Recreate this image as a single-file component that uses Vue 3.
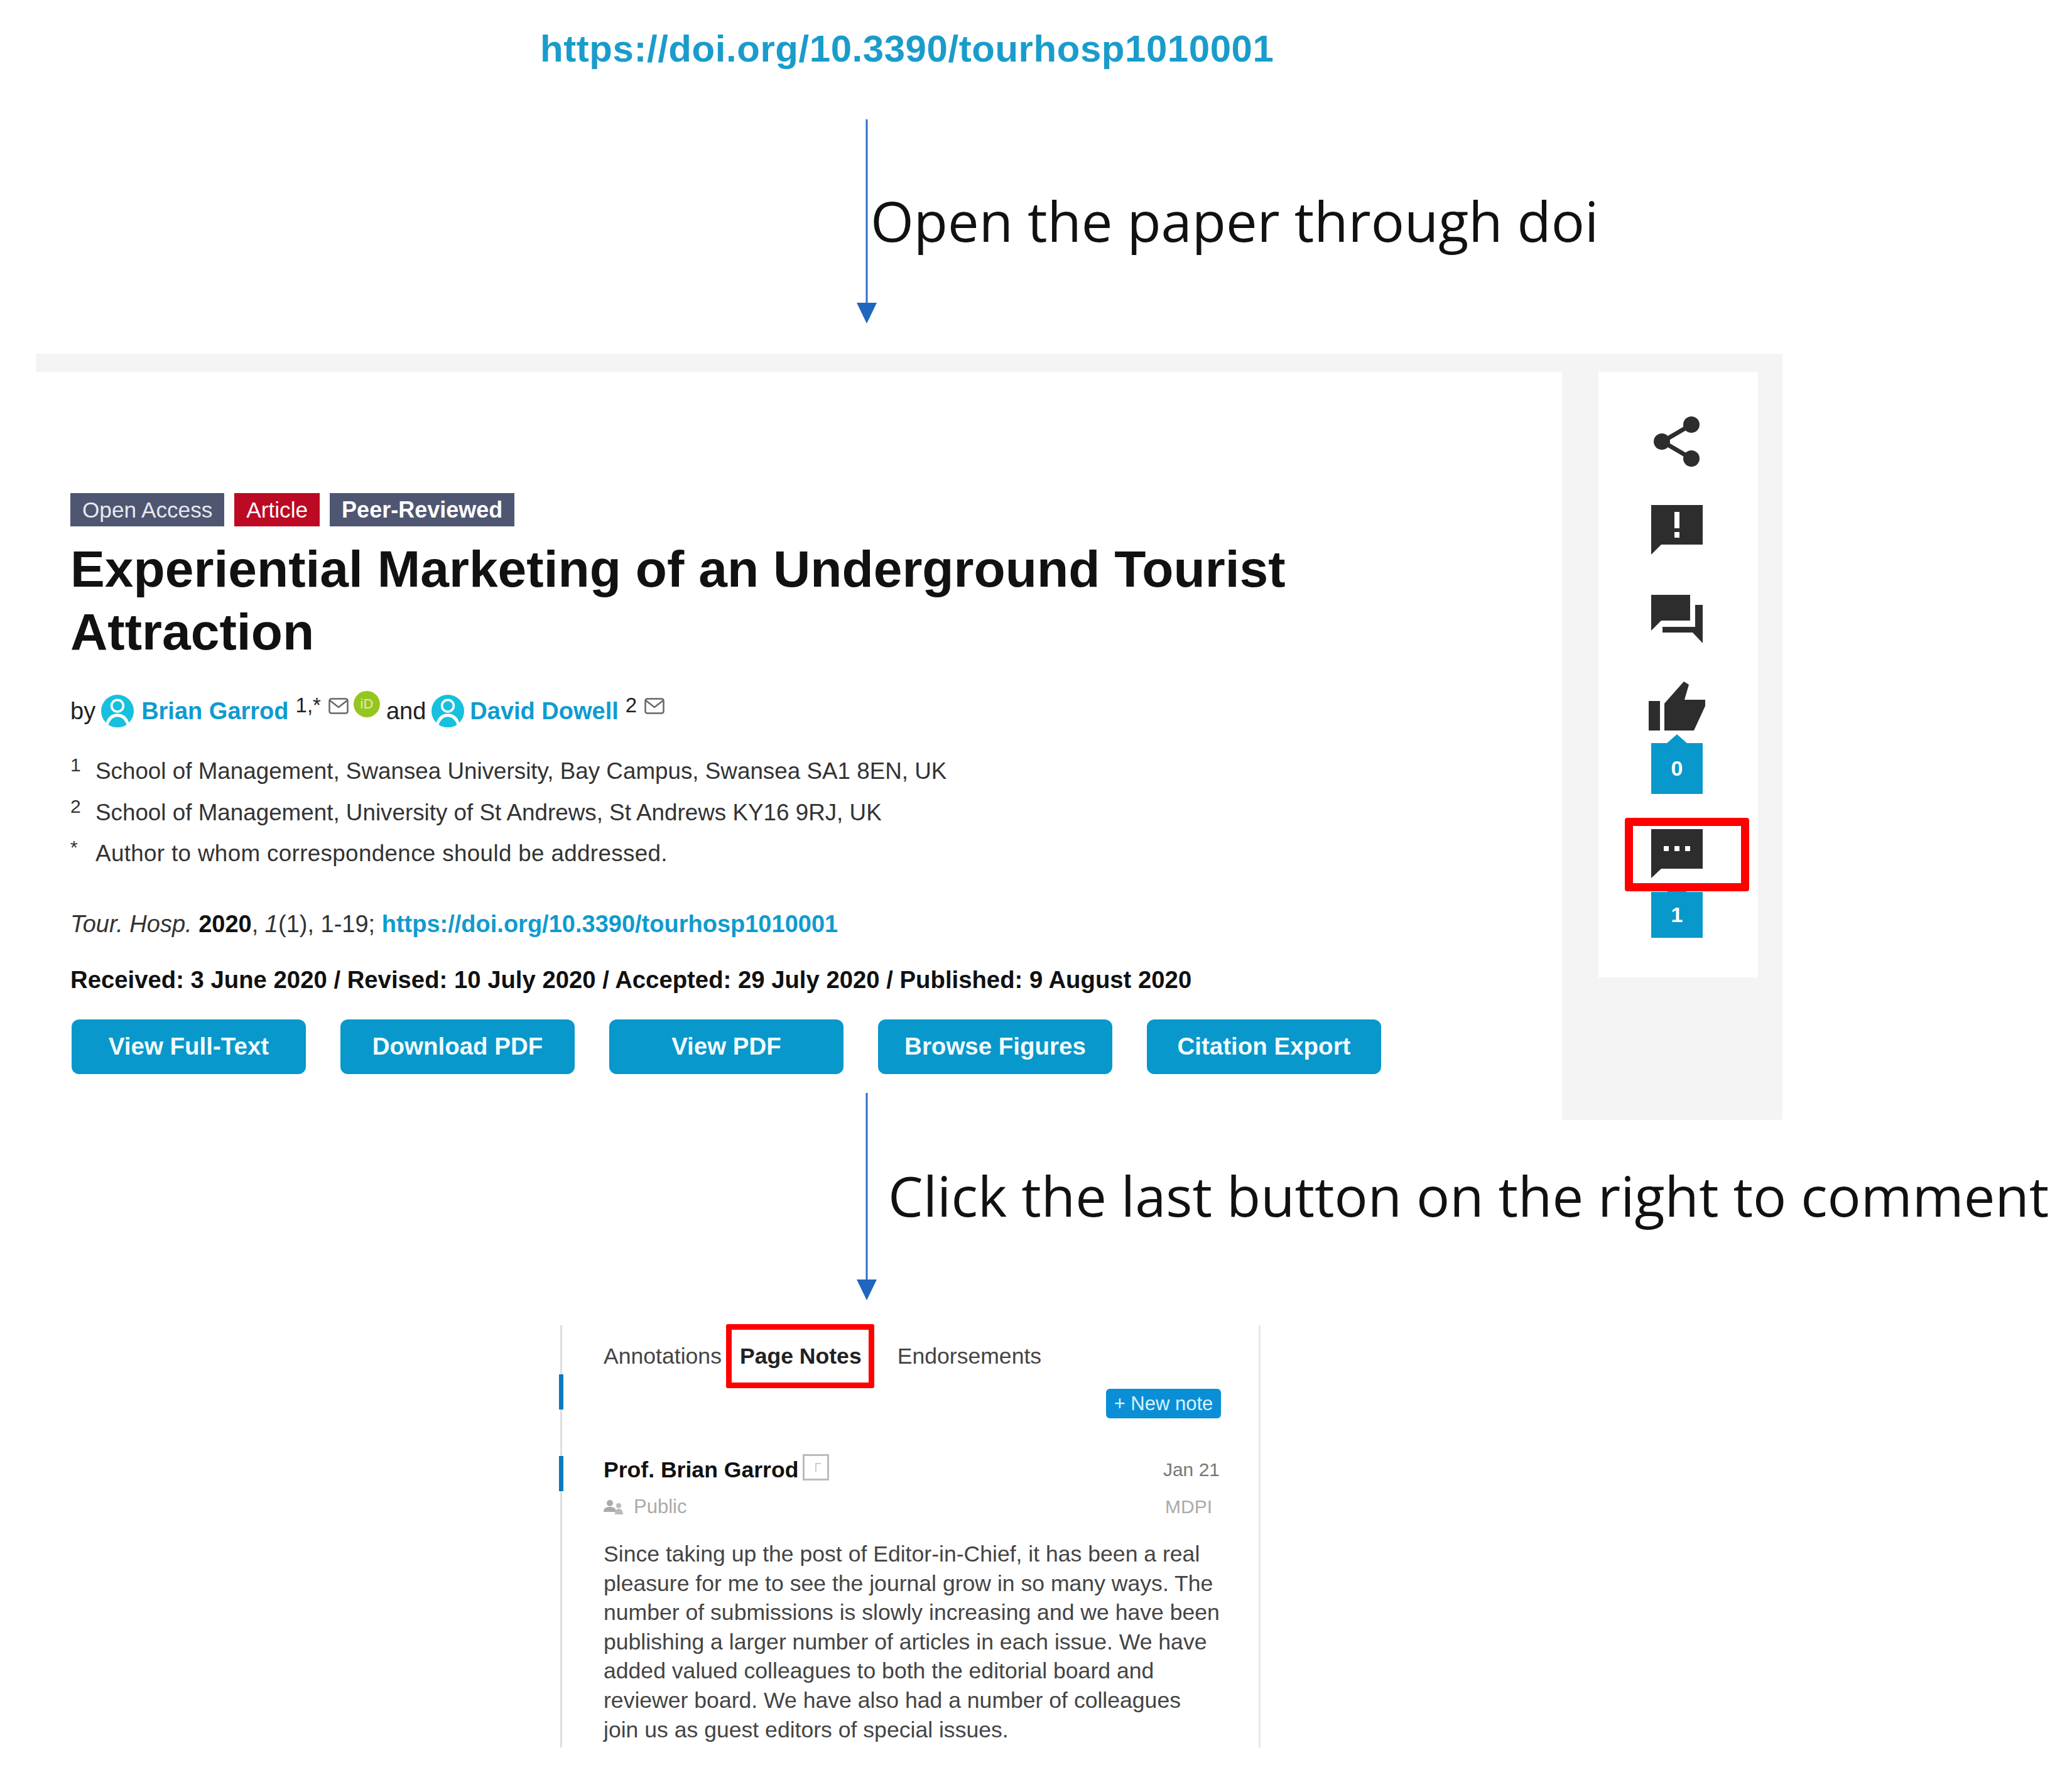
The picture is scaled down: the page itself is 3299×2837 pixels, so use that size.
<template>
  <div class="page">
    <div class="doi-row">
      <a class="doi-big">https://doi.org/10.3390/tourhosp1010001</a>
    </div>

    <div class="step step-one">
      <svg class="arrow" width="36" height="325" viewBox="0 0 36 325">
        <line x1="18" y1="0" x2="18" y2="296" />
        <polygon points="2,292 34,292 18,325" />
      </svg>
      <div class="step-label label-one">Open the paper through doi</div>
    </div>

    <section class="article">
      <div class="article-main">
        <div class="badges">
          <span class="badge slate">Open Access</span>
          <span class="badge red">Article</span>
          <span class="badge slate strong">Peer-Reviewed</span>
        </div>

        <h1 class="title">Experiential Marketing of an Underground Tourist Attraction</h1>

        <div class="authors">
          <span>by</span>
          <svg class="avatar" viewBox="0 0 50 50">
            <circle cx="25" cy="25" r="25" fill="#16c0de" />
            <circle cx="25" cy="17" r="9" fill="none" stroke="#fff" stroke-width="3.5" />
            <path d="M7 44c3-11 10-15 18-15s15 4 18 15c-5 4-11 6-18 6s-13-2-18-6z" fill="#fff" />
            <path d="M11 46c3-8 8-12 14-12s11 4 14 12c-4 3-9 4-14 4s-10-1-14-4z" fill="#16c0de" />
          </svg>
          <a class="author-name">Brian Garrod</a>
          <sup class="author-sup">1,*</sup>
          <svg class="mail" viewBox="0 0 32 26">
            <rect x="1.5" y="1.5" width="29" height="23" rx="3" fill="none" stroke="#666" stroke-width="2.5" />
            <path d="M2 4l14 11L30 4" fill="none" stroke="#666" stroke-width="2.5" />
          </svg>
          <span class="orcid">iD</span>
          <span class="and">and</span>
          <svg class="avatar avatar-tight" viewBox="0 0 50 50">
            <circle cx="25" cy="25" r="25" fill="#16c0de" />
            <circle cx="25" cy="17" r="9" fill="none" stroke="#fff" stroke-width="3.5" />
            <path d="M7 44c3-11 10-15 18-15s15 4 18 15c-5 4-11 6-18 6s-13-2-18-6z" fill="#fff" />
            <path d="M11 46c3-8 8-12 14-12s11 4 14 12c-4 3-9 4-14 4s-10-1-14-4z" fill="#16c0de" />
          </svg>
          <a class="author-name">David Dowell</a>
          <sup class="author-sup">2</sup>
          <svg class="mail" viewBox="0 0 32 26">
            <rect x="1.5" y="1.5" width="29" height="23" rx="3" fill="none" stroke="#666" stroke-width="2.5" />
            <path d="M2 4l14 11L30 4" fill="none" stroke="#666" stroke-width="2.5" />
          </svg>
        </div>

        <div class="affiliations">
          <div v-for="aff in affiliations" :key="aff.mark" class="affiliation">
            <sup class="aff-mark">{{ aff.mark }}</sup>
            <span>{{ aff.text }}</span>
          </div>
        </div>

        <div class="citation">
          <em>Tour. Hosp.</em> <b class="year">2020</b>, <em>1</em>(1), 1-19;
          <a class="doi-small">https://doi.org/10.3390/tourhosp1010001</a>
        </div>

        <div class="dates">Received: 3 June 2020 / Revised: 10 July 2020 / Accepted: 29 July 2020 / Published: 9 August 2020</div>

        <div class="buttons">
          <button v-for="b in buttons" :key="b" class="btn">{{ b }}</button>
        </div>
      </div>

      <aside class="article-side">
        <div class="tools">
          <svg class="tool share" width="74" height="80" viewBox="0 0 74 80">
            <path d="M60 13L14 40l46 27" fill="none" stroke="#2d2d2d" stroke-width="7" />
            <circle cx="60" cy="13" r="13" fill="#2d2d2d" />
            <circle cx="13" cy="40" r="13" fill="#2d2d2d" />
            <circle cx="60" cy="67" r="13" fill="#2d2d2d" />
          </svg>
          <svg class="tool alert" width="82" height="79" viewBox="0 0 82 79">
            <path d="M0 0h82v63H16L0 79z" fill="#2d2d2d" />
            <rect x="37" y="11" width="8" height="26" fill="#fff" />
            <rect x="37" y="43" width="8" height="9" fill="#fff" />
          </svg>
          <svg class="tool chat" width="82" height="77" viewBox="0 0 82 77">
            <path d="M0 0h62v41H16L0 57z" fill="#2d2d2d" />
            <path d="M70 16h12v61L66 60H18v-9h52z" fill="#2d2d2d" />
          </svg>
          <svg class="tool thumb" width="90" height="79" viewBox="0 0 90 79">
            <rect x="0" y="32" width="18" height="47" fill="#2d2d2d" />
            <path d="M25 79V36L56 1l8 5-7 24h33v10L72 79z" fill="#2d2d2d" />
          </svg>
          <div class="count count-like">0</div>
          <svg class="tool comment" width="82" height="78" viewBox="0 0 82 78">
            <path d="M0 0h82v63H16L0 78z" fill="#2d2d2d" />
            <rect x="20" y="27" width="8" height="8" fill="#fff" />
            <rect x="37" y="27" width="8" height="8" fill="#fff" />
            <rect x="54" y="27" width="8" height="8" fill="#fff" />
          </svg>
          <div class="count count-note">1</div>
          <div class="tool-highlight"></div>
        </div>
      </aside>
    </section>

    <div class="step step-two">
      <svg class="arrow" width="36" height="330" viewBox="0 0 36 330">
        <line x1="18" y1="0" x2="18" y2="301" />
        <polygon points="2,297 34,297 18,330" />
      </svg>
      <div class="step-label label-two">Click the last button on the right to comment</div>
    </div>

    <section class="notes">
      <i class="edge-mark mark-a"></i>
      <i class="edge-mark mark-b"></i>

      <nav class="tabs">
        <span class="tab">Annotations</span>
        <span class="tab tab-active">Page Notes</span>
        <span class="tab">Endorsements</span>
        <div class="tab-highlight"></div>
      </nav>

      <div class="new-note-row">
        <button class="new-note">+ New note</button>
      </div>

      <div class="note-head">
        <span class="note-author">Prof. Brian Garrod</span>
        <span class="note-flag"><i></i></span>
        <span class="note-date">Jan 21</span>
      </div>

      <div class="note-meta">
        <svg class="public-icon" width="32" height="24" viewBox="0 0 32 24">
          <circle cx="10" cy="6" r="5" fill="#aaa" />
          <path d="M0 20c0-6 4-8 10-8s10 2 10 8z" fill="#aaa" />
          <circle cx="24" cy="10" r="4" fill="#bbb" />
          <path d="M18 24c0-6 2-9 6-9s7 3 7 9z" fill="#bbb" />
        </svg>
        <span>Public</span>
        <span class="note-group">MDPI</span>
      </div>

      <div class="note-body">
        <div v-for="line in noteLines" :key="line">{{ line }}</div>
      </div>
    </section>
  </div>
</template>

<script setup>
const affiliations = [
  { mark: '1', text: 'School of Management, Swansea University, Bay Campus, Swansea SA1 8EN, UK' },
  { mark: '2', text: 'School of Management, University of St Andrews, St Andrews KY16 9RJ, UK' },
  { mark: '*', text: 'Author to whom correspondence should be addressed.' },
];

const buttons = ['View Full-Text', 'Download PDF', 'View PDF', 'Browse Figures', 'Citation Export'];

const noteLines = [
  'Since taking up the post of Editor-in-Chief, it has been a real',
  'pleasure for me to see the journal grow in so many ways. The',
  'number of submissions is slowly increasing and we have been',
  'publishing a larger number of articles in each issue. We have',
  'added valued colleagues to both the editorial board and',
  'reviewer board. We have also had a number of colleagues',
  'join us as guest editors of special issues.',
];
</script>

<style>
html, body {
  margin: 0;
  background: #fff;
}
</style>

<style scoped>
.page {
  position: relative;
  width: 3299px;
  height: 2837px;
  overflow: hidden;
  background: #fff;
  font-family: "Liberation Sans", Arial, sans-serif;
  color: #222;
}

/* top link */
.doi-row {
  height: 190px;
  padding-left: 860px;
  box-sizing: border-box;
  padding-top: 40px;
}
.doi-big {
  font-size: 60px;
  line-height: 76px;
  font-weight: 700;
  color: #1a9ccb;
  letter-spacing: 0.55px;
}

/* arrows and captions */
.step {
  position: relative;
  z-index: 2;
  display: flex;
  padding-left: 1362px;
}
.arrow line {
  stroke: #2f6fc4;
  stroke-width: 3;
}
.arrow polygon {
  fill: #1f66bd;
}
.step-label {
  font-family: "Open Sans", "Noto Sans", sans-serif;
  font-size: 88.5px;
  line-height: 110px;
  color: #111;
  white-space: nowrap;
}
.label-one {
  margin-top: 106px;
  margin-left: -12px;
}
.label-two {
  margin-top: 108px;
  margin-left: 16px;
}
.step-one {
  height: 325px;
}
.step-two {
  height: 330px;
  margin-top: -43px;
}

/* article panel */
.article {
  display: flex;
  margin: 48px 0 0 57px;
  width: 2781px;
  height: 1220px;
  box-sizing: border-box;
  padding-top: 29px;
  background: #f4f4f4;
}
.article-main {
  width: 2430px;
  box-sizing: border-box;
  padding: 193px 0 0 55px;
  background: #fff;
}
.badges {
  display: flex;
  gap: 16px;
}
.badge {
  height: 53px;
  line-height: 53px;
  padding: 0 19px;
  font-size: 35.2px;
  color: #e6e8ef;
}
.badge.slate {
  background: #4f5671;
}
.badge.red {
  background: #bd0a24;
  color: #fff;
}
.badge.strong {
  color: #fff;
  font-size: 36px;
  font-weight: 700;
}
.title {
  margin: 18px 0 0;
  width: 2100px;
  font-size: 82.2px;
  line-height: 100px;
  font-weight: 700;
  color: #111;
}
.authors {
  display: flex;
  align-items: center;
  height: 60px;
  margin-top: 46px;
  font-size: 38px;
  white-space: nowrap;
}
.avatar {
  width: 52px;
  height: 52px;
  margin: 0 12px 0 9px;
}
.avatar-tight {
  margin-right: 9px;
}
.author-name {
  font-weight: 700;
  color: #0f9bd0;
}
.author-sup {
  align-self: flex-start;
  margin: 0 12px 0 11px;
  font-size: 33px;
  line-height: 42px;
}
.mail {
  width: 32px;
  height: 26px;
  margin-top: -16px;
  margin-right: 8px;
}
.orcid {
  width: 42px;
  height: 42px;
  margin: -22px 10px 0 0;
  border-radius: 50%;
  background: #97c520;
  color: #dff0b0;
  font-size: 22px;
  line-height: 42px;
  text-align: center;
}
.affiliations {
  margin-top: 33px;
}
.affiliation {
  display: flex;
  height: 65.5px;
  font-size: 36.8px;
  line-height: 65px;
  color: #333;
}
.affiliation:last-child {
  letter-spacing: 0.34px;
}
.aff-mark {
  width: 40px;
  flex: none;
  font-size: 30px;
  line-height: 46px;
}
.citation {
  margin-top: 54px;
  font-size: 38px;
  line-height: 50px;
  color: #333;
}
.year {
  color: #111;
}
.doi-small {
  font-weight: 700;
  color: #0f9bd0;
}
.dates {
  margin-top: 39px;
  font-size: 38.3px;
  line-height: 50px;
  font-weight: 700;
  color: #111;
}
.buttons {
  display: flex;
  gap: 55px;
  margin: 38px 0 0 2px;
}
.btn {
  width: 373px;
  height: 87px;
  padding: 0;
  border: 0;
  border-radius: 12px;
  background: #0898cb;
  color: #f2fbff;
  font-family: inherit;
  font-size: 38.5px;
  font-weight: 700;
}

/* tool column */
.article-side {
  flex: 1;
  padding-left: 58px;
}
.tools {
  position: relative;
  display: flex;
  flex-direction: column;
  align-items: center;
  width: 254px;
  height: 964px;
  box-sizing: border-box;
  padding: 71px 4px 0 0;
  background: #fff;
}
.tool {
  display: block;
  flex: none;
}
.share {
  margin-bottom: 61px;
}
.alert {
  margin-bottom: 64px;
}
.chat {
  margin-bottom: 60px;
}
.thumb {
  margin-bottom: 20px;
}
.count {
  position: relative;
  width: 82px;
  background: #0898cb;
  color: #fff;
  font-size: 34px;
  font-weight: 700;
  text-align: center;
}
.count::before {
  content: "";
  position: absolute;
  left: 24px;
  top: -14px;
  border-left: 17px solid transparent;
  border-right: 17px solid transparent;
  border-bottom: 15px solid #0898cb;
}
.count-like {
  height: 81px;
  line-height: 81px;
  margin-bottom: 56px;
}
.count-note {
  height: 73px;
  line-height: 73px;
  margin-top: 22px;
}
.tool-highlight {
  position: absolute;
  left: 42px;
  top: 710px;
  width: 198px;
  height: 117px;
  box-sizing: border-box;
  border: 13px solid #f00;
  border-radius: 4px;
}

/* notes panel */
.notes {
  position: relative;
  margin: 40px 0 0 892px;
  width: 1115px;
  height: 672px;
  box-sizing: border-box;
  padding: 24px 0 0 66px;
  border-left: 3px solid #ddd;
  border-right: 3px solid #e8e8e8;
  font-size: 35.6px;
}
.edge-mark {
  position: absolute;
  left: -5px;
  width: 7px;
  height: 56px;
  background: #0b79bd;
}
.mark-a {
  top: 78px;
}
.mark-b {
  top: 208px;
}
.tabs {
  position: relative;
  display: flex;
  height: 50px;
  line-height: 50px;
  color: #444;
}
.tab {
  margin-right: 29px;
  white-space: nowrap;
}
.tab-active {
  font-weight: 700;
  color: #222;
  margin-right: 57px;
}
.tab-highlight {
  position: absolute;
  left: 195px;
  top: -26px;
  width: 236px;
  height: 102px;
  box-sizing: border-box;
  border: 9px solid #f00;
  border-radius: 3px;
}
.new-note-row {
  display: flex;
  justify-content: flex-end;
  margin-top: 27px;
  padding-right: 60px;
}
.new-note {
  height: 47px;
  width: 183px;
  padding: 0;
  border: 0;
  border-radius: 6px;
  background: #0a8fd6;
  color: #d9f2ff;
  font-family: inherit;
  font-size: 31px;
}
.note-head {
  display: flex;
  align-items: center;
  height: 50px;
  margin-top: 57px;
  padding-right: 62px;
}
.note-author {
  font-weight: 700;
  color: #111;
}
.note-flag {
  position: relative;
  width: 42px;
  height: 42px;
  margin: -8px 0 0 7px;
  box-sizing: border-box;
  border: 3px solid #bbb;
}
.note-flag i {
  position: absolute;
  left: 17px;
  top: 11px;
  width: 7px;
  height: 12px;
  border-left: 2px solid #ccc;
  border-top: 2px solid #ccc;
}
.note-date {
  margin-left: auto;
  font-size: 30px;
  color: #777;
}
.note-meta {
  display: flex;
  align-items: center;
  height: 40px;
  margin-top: 14px;
  padding-right: 74px;
  font-size: 31px;
  color: #aaa;
}
.public-icon {
  margin-right: 16px;
}
.note-group {
  margin-left: auto;
  font-size: 30px;
}
.note-body {
  margin-top: 32px;
  font-size: 35.6px;
  line-height: 46.6px;
  color: #444;
  white-space: nowrap;
}
</style>
